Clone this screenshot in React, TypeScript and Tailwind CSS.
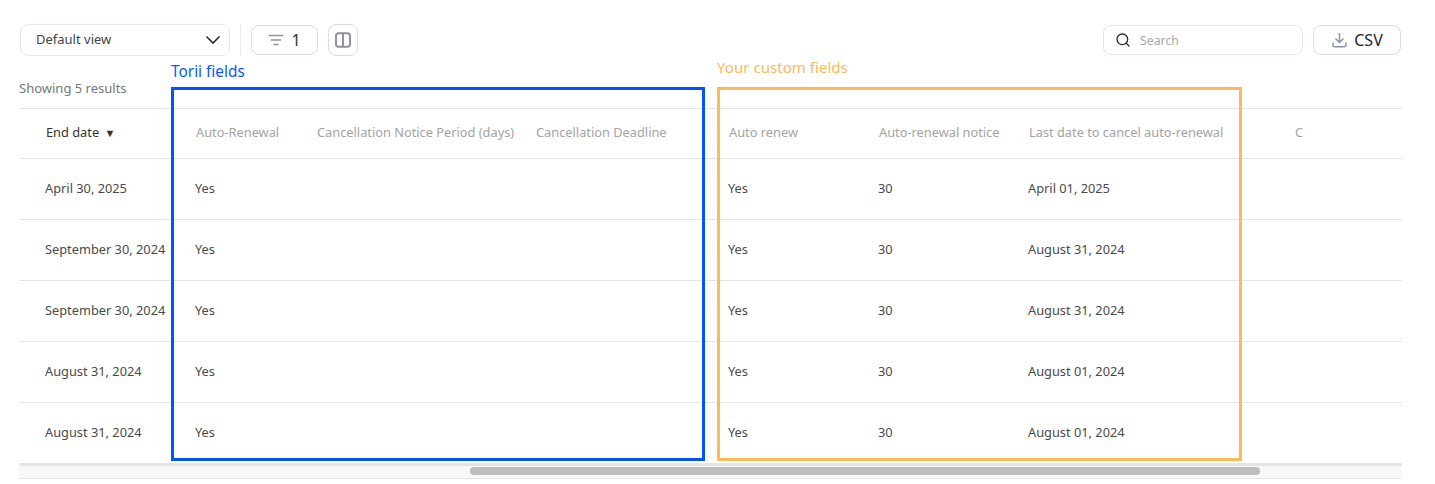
import React from 'react';
import { Search } from 'lucide-react';

const rows = [
  { end: 'April 30, 2025', torii: 'Yes', renew: 'Yes', notice: '30', last: 'April 01, 2025' },
  { end: 'September 30, 2024', torii: 'Yes', renew: 'Yes', notice: '30', last: 'August 31, 2024' },
  { end: 'September 30, 2024', torii: 'Yes', renew: 'Yes', notice: '30', last: 'August 31, 2024' },
  { end: 'August 31, 2024', torii: 'Yes', renew: 'Yes', notice: '30', last: 'August 01, 2024' },
  { end: 'August 31, 2024', torii: 'Yes', renew: 'Yes', notice: '30', last: 'August 01, 2024' },
];

const gridCols = 'grid grid-cols-[176px_121px_219px_193px_150px_150px_266px_1fr]';

const App = () => {
  return (
    <div className="relative h-[484px] w-[1435px] overflow-hidden bg-white font-['Noto_Sans',sans-serif] text-[#353c4c]">
      {/* toolbar */}
      <div className="flex h-[32px] items-center pl-5 pr-[34px] mt-6">
        <div className="flex h-8 w-[210px] items-center justify-between rounded-lg border border-[#e3e6f0] pl-[15px] pr-[8px] text-[13px] text-[#444]">
          <span>Default view</span>
          <svg width="16" height="10" viewBox="0 0 16 10" fill="none" stroke="#2b2b2b" strokeWidth="1.6">
            <path d="M1.5 1.5L8 8L14.5 1.5" />
          </svg>
        </div>
        <div className="ml-[10px] h-8 w-px bg-[#e6e8ef]" />
        <button className="ml-[10px] flex h-[30px] w-[67px] items-center justify-center gap-[7px] rounded-lg border border-[#d9dde8] text-[16px] text-[#2d3340]">
          <svg width="16" height="12" viewBox="0 0 16 12" fill="none" stroke="#8d93a5" strokeWidth="1.5">
            <path d="M0.5 1.5H15.5M3 6H13M5.5 10.5H10.5" />
          </svg>
          <span>1</span>
        </button>
        <button className="ml-[10px] flex h-8 w-[30px] items-center justify-center rounded-lg border border-[#d9dde8]">
          <svg width="16" height="16" viewBox="0 0 16 16" fill="none" stroke="#8d93a5" strokeWidth="2">
            <rect x="1" y="1.25" width="14" height="13.5" rx="2.5" />
            <path d="M8 1V15" />
          </svg>
        </button>
        <div className="ml-auto flex h-[30px] w-[200px] items-center rounded-lg border border-[#e3e6f0] pl-[11px]">
          <Search className="h-4 w-4 text-[#2b2b2b]" strokeWidth={2} />
          <span className="ml-[9px] pt-[2px] text-[12.3px] text-[#a8a8a8]">Search</span>
        </div>
        <button className="ml-[10px] flex h-[30px] w-[88px] items-center justify-center gap-[7px] rounded-lg border border-[#d9dde8] pl-[1px] text-[16px] text-[#20242e]">
          <svg width="15" height="16" viewBox="0 0 15 16" fill="none" stroke="#8d93a5" strokeWidth="1.5">
            <path d="M7.5 1V10M3.5 6.5L7.5 10.5L11.5 6.5M1 10.5V13C1 14 1.7 14.75 2.7 14.75H12.3C13.3 14.75 14 14 14 13V10.5" />
          </svg>
          <span>CSV</span>
        </button>
      </div>

      {/* results count */}
      <div className="mt-[24px] h-[17px] pl-[19px] text-[13px] leading-[17px] text-[#777]">Showing 5 results</div>

      {/* table */}
      <div className="ml-[19px] mt-[11px] w-[1383px] overflow-hidden">
        <div className={`${gridCols} h-[51px] items-center border-y border-[#e5e5e5] pb-[2px] text-[12.8px] text-[#a3a3a3]`}>
          <div className="pl-[27px] text-[#333]">End date <span className="ml-[2px] text-[11px]">▼</span></div>
          <div className="pl-px">Auto-Renewal</div>
          <div className="pl-px">Cancellation Notice Period (days)</div>
          <div className="pl-px">Cancellation Deadline</div>
          <div className="pl-px">Auto renew</div>
          <div className="pl-px">Auto-renewal notice</div>
          <div className="pl-px">Last date to cancel auto-renewal</div>
          <div className="pl-px">C</div>
        </div>
        {rows.map((row, i) => (
          <div key={i} className={`${gridCols} h-[61px] items-center border-b border-[#e5e5e5] text-[12.8px] text-[#4a4a4a]`}>
            <div className="pl-[26px] whitespace-nowrap">{row.end}</div>
            <div>{row.torii}</div>
            <div />
            <div />
            <div>{row.renew}</div>
            <div>{row.notice}</div>
            <div>{row.last}</div>
            <div />
          </div>
        ))}
        {/* horizontal scrollbar */}
        <div className="h-[15px] border-y border-t-2 border-[#e5e5e5] bg-[#f8f8f8] pt-[1px]">
          <div className="ml-[451px] h-2 w-[790px] rounded-full bg-[#bdbdbd]" />
        </div>
      </div>

      {/* annotations over the table */}
      <div className="absolute left-[171px] top-[62px] text-[15.4px] leading-5 text-[#0a58f5]">Torii fields</div>
      <div className="absolute left-[171px] top-[87px] h-[374px] w-[534px] border-[3px] border-[#0054ff]" />
      <div className="absolute left-[717px] top-[57px] text-[15.1px] leading-5 text-[#ffb957]">Your custom fields</div>
      <div className="absolute left-[717px] top-[87px] h-[374px] w-[525px] border-[3px] border-[#ffb957]" />
    </div>
  );
};

export default App;
